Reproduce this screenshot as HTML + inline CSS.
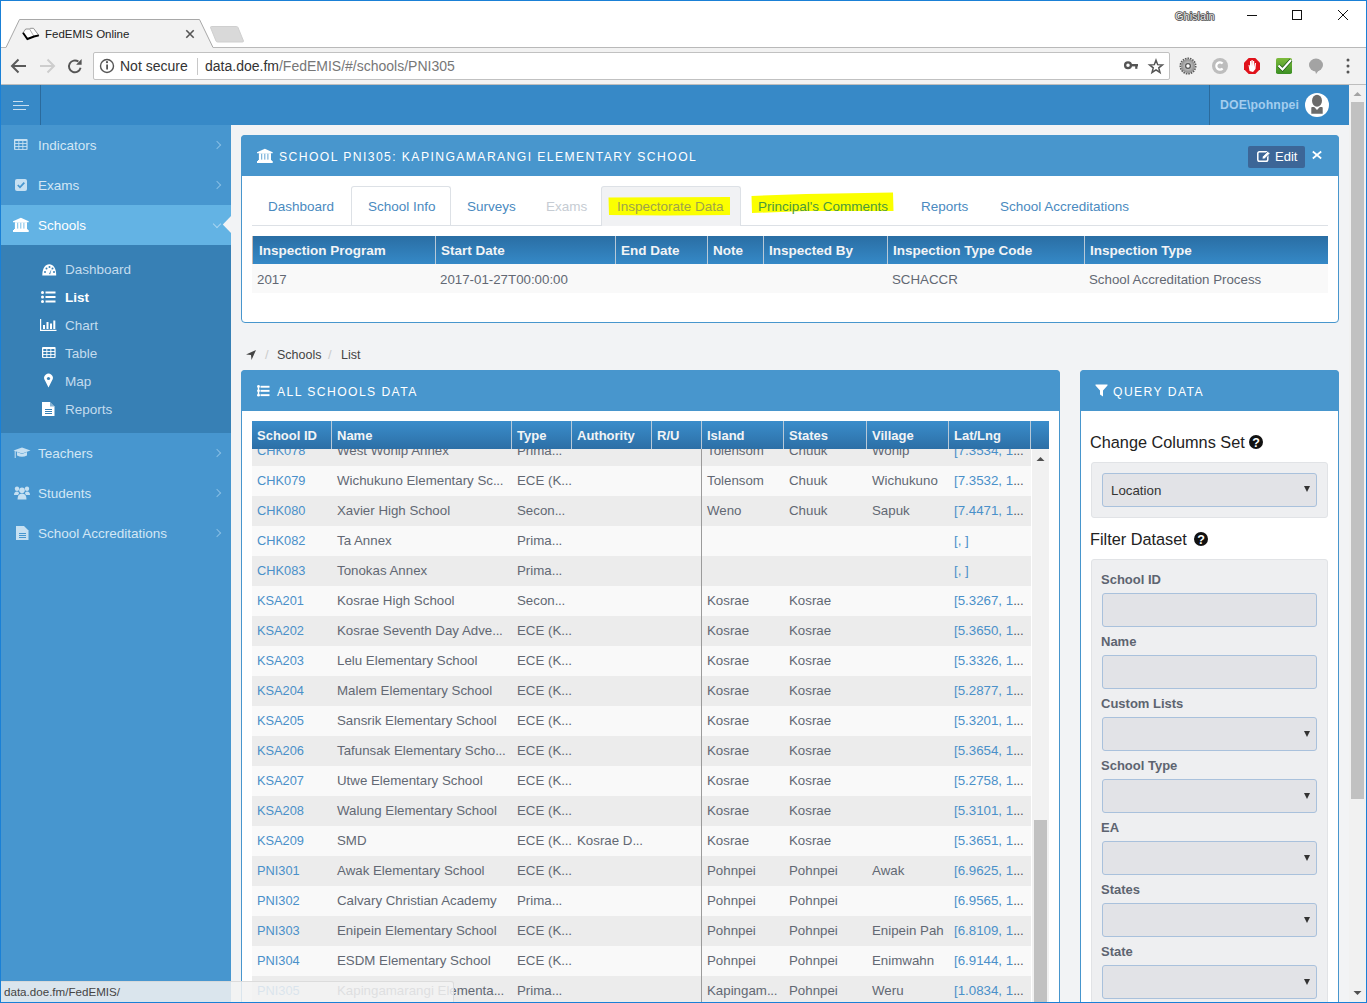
<!DOCTYPE html>
<html><head><meta charset="utf-8">
<style>
*{box-sizing:border-box;margin:0;padding:0}
html,body{width:1367px;height:1003px;overflow:hidden;background:#fff;font-family:"Liberation Sans",sans-serif;}
.a{position:absolute;white-space:nowrap}
#win{position:absolute;left:0;top:0;width:1367px;height:1003px;overflow:hidden;background:#fff}
#bord{position:absolute;left:0;top:0;width:1367px;height:1003px;border:1px solid #1a80d6;pointer-events:none;z-index:50}
/* chrome */
#toolbar{left:1px;top:48px;width:1365px;height:37px;background:#f2f2f2;border-bottom:1px solid #bdbdbd}
#addr{left:92px;top:4px;width:1077px;height:28px;background:#fff;border:1px solid #c1c1c1;border-radius:2px}
/* app */
#hdr{left:1px;top:85px;width:1348px;height:40px;background:#3789c7}
#side{left:1px;top:125px;width:230px;height:878px;background:#4796cf}
#content{left:231px;top:125px;width:1118px;height:878px;background:#f2f3f5}
#vscroll{left:1349px;top:85px;width:17px;height:917px;background:#f1f1f1}
.menu{position:absolute;left:1px;width:230px;height:40px;color:#d3e7f5;font-size:13.5px;line-height:40px}
.menu .lbl{position:absolute;left:37px;top:1px}
.chev{position:absolute;width:6px;height:6px;border-top:1.3px solid #86bde3;border-right:1.3px solid #86bde3;transform:rotate(45deg)}
.sub{position:absolute;left:1px;width:230px;height:28px;line-height:28px;color:#c4dcee;font-size:13.5px}
.sub .lbl{position:absolute;left:64px;top:1px}
svg{overflow:visible}
.panel{position:absolute;background:#fff;border:1px solid #4896cd;border-radius:4px}
.phead{position:absolute;left:-1px;top:-1px;right:-1px;height:41px;background:#4896cd;border-radius:4px 4px 0 0}
.ptitle{position:absolute;color:#fff;font-size:12.2px;letter-spacing:1.4px;line-height:20px}
.tab{position:absolute;top:187px;height:40px;line-height:40px;font-size:13.5px;color:#4a8ac0}
.th{top:421px;height:28px;line-height:28px;background:linear-gradient(#3a8dcb,#2c6fa6);color:#f2f4f6;font-weight:bold;font-size:13px;padding-left:5px;border-left:1px solid #b8c9d8;padding-top:1px}
.th2{top:236px;height:28px;line-height:28px;background:linear-gradient(#2a6ea4,#3589c7);color:#f2f4f6;font-weight:bold;font-size:13.5px;padding-left:5px;border-left:1px solid #b8c9d8;padding-top:1px}
.tt{height:30px;line-height:30px;font-size:13.3px;color:#626873}
.tl{height:30px;line-height:30px;font-size:13.3px;color:#4a90c9}
.id{font-size:12.8px}
.el{letter-spacing:-0.3px}
.tl .el{color:#555a63}
.flbl{font-size:13px;font-weight:bold;color:#5d6470;line-height:18px}
.inp{width:215px;height:34px;background:#e2e3e7;border:1px solid #a9c1dc;border-radius:3px}
.caret{width:0;height:0;border-left:3.5px solid transparent;border-right:3.5px solid transparent;border-top:6px solid #333}
</style></head><body>
<div id="win">
  <!-- title/tab strip -->
  <svg class="a" style="left:0;top:0" width="1367" height="48">
    <line x1="1" y1="47.5" x2="6" y2="47.5" stroke="#b9b9b9" stroke-width="1"/><line x1="213" y1="47.5" x2="1366" y2="47.5" stroke="#b9b9b9" stroke-width="1"/>
    <path d="M5.5 48.5 L19.5 19.5 L199.5 19.5 L213.5 48.5 Z" fill="#f2f2f2" stroke="none"/><path d="M6 47.5 L19.5 19.5 L199.5 19.5 L213 47.5" fill="none" stroke="#a8a8a8" stroke-width="1"/>
    <path d="M211.5 26.5 L236.5 26.5 Q237.5 26.5 238 27.5 L243.5 41 Q243.5 42 242.5 42 L217.5 42 Q216.5 42 216 41 L210.5 27.5 Q210.5 26.5 211.5 26.5 Z" fill="#d9d9d9" stroke="#cfcfcf" stroke-width="1"/>
    <!-- book icon -->
    <g transform="translate(18,22)">
      <path d="M5 10.75 L7.7 7 L11.6 7 L12.3 6.3 L15.5 6.3 L20.8 13.4 L16 14.5 L9.4 17 Z" fill="#fff" stroke="#777" stroke-width="0.8"/>
      <path d="M11.6 7 L16 14.5" stroke="#999" stroke-width="0.8"/>
      <path d="M5 10.75 L9.4 17 L16 14.5 L20.8 13.4" fill="none" stroke="#000" stroke-width="1.9"/>
    </g>
    <!-- tab close -->
    <path d="M186.3 30.3 L193.7 37.7 M193.7 30.3 L186.3 37.7" stroke="#555" stroke-width="1.6"/>
    <!-- window controls -->
    <line x1="1247" y1="15.5" x2="1257" y2="15.5" stroke="#111" stroke-width="1"/>
    <rect x="1292.5" y="10.5" width="9" height="9" fill="none" stroke="#111" stroke-width="1"/>
    <path d="M1338 10 L1348 20 M1348 10 L1338 20" stroke="#111" stroke-width="1"/>
  </svg>
  <div class="a" style="left:45px;top:26px;font-size:11.5px;color:#222;line-height:16px">FedEMIS Online</div>
  <svg class="a" style="left:1174px;top:8px" width="44" height="16"><text x="1" y="11.8" font-family="Liberation Sans" font-size="11" fill="#e8e8e8" stroke="#4a4a4a" stroke-width="1.6" paint-order="stroke" stroke-linejoin="round">Ghislain</text></svg>
  <div class="a" id="toolbar">
    <svg class="a" style="left:0;top:-1px" width="1365" height="38">
      <!-- back -->
      <path d="M11 19 L25 19 M17.5 12.5 L11 19 L17.5 25.5" fill="none" stroke="#5a5a5a" stroke-width="2"/>
      <!-- fwd -->
      <path d="M39 19 L53 19 M46.5 12.5 L53 19 L46.5 25.5" fill="none" stroke="#cdcdcd" stroke-width="2"/>
      <!-- reload -->
      <path d="M77.4 14.6 A5.9 5.9 0 1 0 79.6 20.8" fill="none" stroke="#555" stroke-width="1.9"/>
      <path d="M80.6 12 L80.6 17.8 L75.1 17.8 Z" fill="#555"/>
      <!-- right side icons -->
      <!-- gear -->
      <defs><radialGradient id="gg"><stop offset="0" stop-color="#e0e0e0"/><stop offset="1" stop-color="#8c8c8c"/></radialGradient>
      <linearGradient id="cg" x1="0" y1="0" x2="0" y2="1"><stop offset="0" stop-color="#7dbb3c"/><stop offset="1" stop-color="#3b8f24"/></linearGradient></defs>
      <g transform="translate(1187,19)">
        <circle r="7.6" fill="none" stroke="#5c5c5c" stroke-width="1.8" stroke-dasharray="1.6 0.9"/>
        <circle r="7" fill="url(#gg)"/>
        <circle r="2.4" fill="none" stroke="#555" stroke-width="1.2"/>
        <circle r="1.4" fill="#fff"/>
      </g>
      <g transform="translate(1219,19)">
        <circle r="8" fill="#bdbdbd"/>
        <path d="M2.6 -2.4 A3.6 3.6 0 1 0 2.6 2.4" fill="none" stroke="#fff" stroke-width="2.2"/>
      </g>
      <g transform="translate(1251,19)">
        <path d="M-3.3 -8 L3.3 -8 L8 -3.3 L8 3.3 L3.3 8 L-3.3 8 L-8 3.3 L-8 -3.3 Z" fill="#e0121b"/>
        <path d="M-2.5 5 L-3.5 -1 L-2.5 -1 L-2 1 L-2 -5 L-0.8 -5 L-0.8 0 L-0.5 -6 L0.7 -6 L0.7 0 L1 -5 L2.2 -5 L2.2 1 L3 -3 L4 -3 L3.5 3 L1 6 Z" fill="#fff"/>
      </g>
      <g transform="translate(1283,19)">
        <rect x="-8" y="-8" width="16" height="16" rx="1.8" fill="url(#cg)"/>
        <path d="M-5.5 -0.5 L-1.5 3.5 L7 -6" fill="none" stroke="#1f5a14" stroke-width="3.6"/>
        <path d="M-5.5 -0.5 L-1.5 3.5 L7 -6" fill="none" stroke="#fff" stroke-width="2.2"/>
      </g>
      <g transform="translate(1315,18)">
        <ellipse rx="7" ry="6.5" fill="#a3a3a3"/>
        <path d="M-1 5 L0 9 L3 5 Z" fill="#a3a3a3"/>
      </g>
      <g fill="#555"><circle cx="1347" cy="13" r="1.5"/><circle cx="1347" cy="19" r="1.5"/><circle cx="1347" cy="25" r="1.5"/></g>
    </svg>
    <div class="a" id="addr">
      <svg class="a" style="left:0;top:0" width="30" height="26">
        <circle cx="13" cy="13" r="6.5" fill="none" stroke="#555" stroke-width="1.4"/>
        <rect x="12.2" y="11.5" width="1.8" height="5" fill="#555"/>
        <circle cx="13" cy="9.2" r="1.1" fill="#555"/>
      </svg>
      <div class="a" style="left:26px;top:5px;font-size:14px;color:#333;line-height:16px">Not secure</div>
      <div class="a" style="left:103px;top:5px;width:1px;height:17px;background:#c8c8c8"></div>
      <div class="a" style="left:111px;top:5px;font-size:14px;color:#333;line-height:16px">data.doe.fm<span style="color:#777">/FedEMIS/#/schools/PNI305</span></div>
    </div>
    <svg class="a" style="left:0;top:-1px" width="1365" height="38">
      <circle cx="1127" cy="18.3" r="2.9" fill="none" stroke="#555" stroke-width="2.3"/>
      <rect x="1129.5" y="17" width="7.5" height="2.4" fill="#555"/>
      <rect x="1134.2" y="17" width="2.2" height="4.8" fill="#555"/>
      <path d="M1155.00 13.20 L1156.70 17.65 L1161.47 17.90 L1157.76 20.90 L1159.00 25.50 L1155.00 22.90 L1151.00 25.50 L1152.24 20.90 L1148.53 17.90 L1153.30 17.65 Z" fill="none" stroke="#555" stroke-width="1.5" stroke-linejoin="miter"/>
    </svg>
  </div>

  <!-- APP HEADER -->
  <div class="a" id="hdr">
    <div class="a" style="left:12px;top:16px;width:10px;height:1.2px;background:#c8def0"></div>
    <div class="a" style="left:12px;top:20px;width:16px;height:1.2px;background:#c8def0"></div>
    <div class="a" style="left:12px;top:24px;width:13px;height:1.2px;background:#c8def0"></div>
    <div class="a" style="left:39px;top:0;width:1px;height:40px;background:#2b6a9c"></div>
    <div class="a" style="left:1208px;top:0;width:1px;height:40px;background:#2b6a9c"></div>
    <div class="a" style="left:1219px;top:11px;font-size:12.3px;font-weight:bold;letter-spacing:0.1px;color:#a3cdee;line-height:18px">DOE\pohnpei</div>
    <svg class="a" style="left:1303px;top:8px" width="26" height="26">
      <circle cx="13" cy="12" r="12" fill="#fff"/>
      <ellipse cx="13" cy="7.8" rx="5" ry="6" fill="#6b6b6b"/>
      <path d="M7.3 14.8 Q7.3 14 8.2 14 L10.2 14 L13 17 L15.8 14 L17.8 14 Q18.7 14 18.7 14.8 L18.7 20.8 L7.3 20.8 Z" fill="#6b6b6b"/>
    </svg>
  </div>

  <!-- SIDEBAR -->
  <div class="a" id="side"></div>
  <div class="menu" style="top:125px"><span class="lbl">Indicators</span><span class="chev" style="left:213px;top:17px"></span>
    <svg class="a" style="left:13px;top:14px" width="14" height="11"><rect x="0" y="0" width="13.6" height="11" rx="1" fill="#c6e0f2"/><rect x="1.3" y="2" width="3.1" height="2.1" fill="#4796cf"/><rect x="5.3" y="2" width="3.1" height="2.1" fill="#4796cf"/><rect x="9.3" y="2" width="3.1" height="2.1" fill="#4796cf"/><rect x="1.3" y="5" width="3.1" height="2.1" fill="#4796cf"/><rect x="5.3" y="5" width="3.1" height="2.1" fill="#4796cf"/><rect x="9.3" y="5" width="3.1" height="2.1" fill="#4796cf"/><rect x="1.3" y="8" width="3.1" height="2.1" fill="#4796cf"/><rect x="5.3" y="8" width="3.1" height="2.1" fill="#4796cf"/><rect x="9.3" y="8" width="3.1" height="2.1" fill="#4796cf"/></svg>
  </div>
  <div class="menu" style="top:165px"><span class="lbl">Exams</span><span class="chev" style="left:213px;top:17px"></span>
    <svg class="a" style="left:14px;top:14px" width="12" height="12"><rect x="0" y="0" width="12" height="12" rx="2" fill="#c6e0f2"/><path d="M2.8 6 L5 8.3 L9.3 3.7" fill="none" stroke="#4796cf" stroke-width="1.8"/></svg>
  </div>
  <div class="menu" style="top:205px;background:#63b3e4;color:#fff"><span class="lbl">Schools</span><span class="chev" style="left:213px;top:16px;transform:rotate(135deg);border-color:#a9d4f0"></span>
    <svg class="a" style="left:12px;top:12px" width="16" height="15"><path d="M7.85 0.8 L15.7 4.2 L15.7 5.3 L0 5.3 L0 4.2 Z" fill="#fff"/><rect x="1.9" y="5.2" width="12.1" height="7" fill="#fff"/><g fill="#63b3e4" opacity="0.85"><rect x="4.2" y="5.8" width="1" height="5.8"/><rect x="7.3" y="5.8" width="1" height="5.8"/><rect x="10.4" y="5.8" width="1" height="5.8"/></g><rect x="1" y="12" width="13.7" height="1.2" fill="#fff"/><rect x="0" y="13" width="15.7" height="2" fill="#fff"/></svg>
    <svg class="a" style="left:221px;top:10px" width="10" height="19"><path d="M10 0 L0.8 9.5 L10 19 Z" fill="#f2f3f5"/></svg>
  </div>
  <div class="a" style="left:1px;top:245px;width:230px;height:188px;background:#3780b5"></div>
  <div class="sub" style="top:255px;color:#c4dcee"><span class="lbl">Dashboard</span>
    <svg class="a" style="left:40.5px;top:8.5px" width="15" height="12"><path d="M0.3 11.5 C0.3 4 3.5 0.3 7.25 0.3 C11 0.3 14.2 4 14.2 11.5 Z" fill="#fff"/><g fill="#3780b5"><circle cx="3" cy="8" r="1"/><circle cx="4.5" cy="4.5" r="1"/><circle cx="7.5" cy="3" r="1"/><circle cx="10.5" cy="4.5" r="1"/><circle cx="12" cy="8" r="1"/><path d="M7 10 L9.5 5 L8.2 10.2 Z"/></g></svg>
  </div>
  <div class="sub" style="top:283px;color:#fff;font-weight:bold"><span class="lbl">List</span>
    <svg class="a" style="left:40px;top:8px" width="15" height="12"><g fill="#fff"><circle cx="1.5" cy="1.5" r="1.5"/><circle cx="1.5" cy="6" r="1.5"/><circle cx="1.5" cy="10.5" r="1.5"/><rect x="4.5" y="0.5" width="10" height="2"/><rect x="4.5" y="5" width="10" height="2"/><rect x="4.5" y="9.5" width="10" height="2"/></g></svg>
  </div>
  <div class="sub" style="top:311px"><span class="lbl">Chart</span>
    <svg class="a" style="left:39px;top:8px" width="17" height="12"><g fill="#fff"><rect x="0" y="0" width="1.2" height="12"/><rect x="0" y="10.8" width="16.5" height="1.2"/><rect x="3" y="6" width="2" height="4"/><rect x="6.5" y="3" width="2" height="7"/><rect x="10" y="4.5" width="2" height="5.5"/><rect x="13.3" y="1.5" width="2" height="8.5"/></g></svg>
  </div>
  <div class="sub" style="top:339px"><span class="lbl">Table</span>
    <svg class="a" style="left:40.5px;top:8px" width="14" height="11"><rect x="0" y="0" width="13.6" height="11" rx="1" fill="#fff"/><rect x="1.3" y="2" width="3.1" height="2.1" fill="#3780b5"/><rect x="5.3" y="2" width="3.1" height="2.1" fill="#3780b5"/><rect x="9.3" y="2" width="3.1" height="2.1" fill="#3780b5"/><rect x="1.3" y="5" width="3.1" height="2.1" fill="#3780b5"/><rect x="5.3" y="5" width="3.1" height="2.1" fill="#3780b5"/><rect x="9.3" y="5" width="3.1" height="2.1" fill="#3780b5"/><rect x="1.3" y="8" width="3.1" height="2.1" fill="#3780b5"/><rect x="5.3" y="8" width="3.1" height="2.1" fill="#3780b5"/><rect x="9.3" y="8" width="3.1" height="2.1" fill="#3780b5"/></svg>
  </div>
  <div class="sub" style="top:367px"><span class="lbl">Map</span>
    <svg class="a" style="left:43px;top:7px" width="10" height="14"><path d="M4.5 13.5 L1 6.5 A4.3 4.3 0 1 1 8 6.5 Z" fill="#fff"/><circle cx="4.5" cy="4.5" r="1.6" fill="#3780b5"/></svg>
  </div>
  <div class="sub" style="top:395px"><span class="lbl">Reports</span>
    <svg class="a" style="left:41px;top:7px" width="13" height="14"><path d="M0 0 L8 0 L12.5 4.5 L12.5 14 L0 14 Z" fill="#fff"/><path d="M8 0 L8 4.5 L12.5 4.5" fill="#3780b5" opacity="0.6"/><g fill="#3780b5"><rect x="3" y="7" width="7" height="1"/><rect x="3" y="9" width="7" height="1"/><rect x="3" y="11" width="7" height="1"/></g></svg>
  </div>
  <div class="menu" style="top:433px"><span class="lbl">Teachers</span><span class="chev" style="left:213px;top:17px"></span>
    <svg class="a" style="left:12px;top:14px" width="18" height="13"><path d="M9 0.5 L17.5 3.5 L9 6.5 L0.5 3.5 Z" fill="#c6e0f2"/><path d="M4 5 L4 8.5 Q9 11 14 8.5 L14 5 L9 7 Z" fill="#c6e0f2"/><rect x="1.7" y="4" width="1" height="7" fill="#c6e0f2"/></svg>
  </div>
  <div class="menu" style="top:473px"><span class="lbl">Students</span><span class="chev" style="left:213px;top:17px"></span>
    <svg class="a" style="left:13px;top:13px" width="16" height="14"><g fill="#c6e0f2"><circle cx="3" cy="2.8" r="2.2"/><circle cx="13" cy="2.8" r="2.2"/><circle cx="8" cy="4.3" r="2.8"/><path d="M0 9 Q0 5.5 3 5.5 Q5 5.5 5 7.5 L4 9 Z"/><path d="M16 9 Q16 5.5 13 5.5 Q11 5.5 11 7.5 L12 9 Z"/><path d="M3.5 13.5 Q3.5 7.5 8 7.5 Q12.5 7.5 12.5 13.5 Z"/></g></svg>
  </div>
  <div class="menu" style="top:513px"><span class="lbl">School Accreditations</span><span class="chev" style="left:213px;top:17px"></span>
    <svg class="a" style="left:15px;top:13px" width="13" height="14"><path d="M0 0 L8 0 L12.5 4.5 L12.5 14 L0 14 Z" fill="#c6e0f2"/><g fill="#4796cf"><rect x="3" y="7" width="7" height="1"/><rect x="3" y="9" width="7" height="1"/><rect x="3" y="11" width="7" height="1"/></g></svg>
  </div>

  <!-- CONTENT -->
  <div class="a" id="content"></div>

  <!-- school panel -->
  <div class="panel" style="left:241px;top:135px;width:1098px;height:188px">
    <div class="phead"></div>
  </div>
  <svg class="a" style="left:257px;top:148px" width="16" height="15"><path d="M7.85 0.8 L15.7 4.2 L15.7 5.3 L0 5.3 L0 4.2 Z" fill="#fff"/><rect x="1.9" y="5.2" width="12.1" height="7" fill="#fff"/><g fill="#4896cd" opacity="0.85"><rect x="4.2" y="5.8" width="1" height="5.8"/><rect x="7.3" y="5.8" width="1" height="5.8"/><rect x="10.4" y="5.8" width="1" height="5.8"/></g><rect x="1" y="12" width="13.7" height="1.2" fill="#fff"/><rect x="0" y="13" width="15.7" height="2" fill="#fff"/></svg>
  <div class="a ptitle" style="left:279px;top:147px">SCHOOL PNI305: KAPINGAMARANGI ELEMENTARY SCHOOL</div>
  <div class="a" style="left:1248px;top:146px;width:57px;height:22px;background:#3c6697;border-radius:2px;color:#fff;font-size:13px;line-height:21px;padding-left:27px">Edit</div>
  <svg class="a" style="left:1257px;top:150px" width="16" height="13"><rect x="0.8" y="1.8" width="10" height="9.5" rx="1.8" fill="none" stroke="#fff" stroke-width="1.5"/><path d="M5 9 L5.3 6.8 L10.8 1.3 L13 3.5 L7.5 9 Z" fill="#fff" stroke="#3c6697" stroke-width="0.9"/></svg>
  <svg class="a" style="left:1312px;top:151px" width="10" height="8"><path d="M0.8 0.5 L9.2 7.5 M9.2 0.5 L0.8 7.5" stroke="#fff" stroke-width="1.7"/></svg>

  <!-- tabs -->
  <div class="a" style="left:252px;top:225px;width:1076px;height:1px;background:#dde1e6"></div>
  <div class="tab" style="left:268px">Dashboard</div>
  <div class="tab" style="left:351px;width:100px;border:1px solid #dde1e6;border-bottom:none;border-radius:3px 3px 0 0;background:#fff;padding-left:16px;line-height:40px;top:186px;height:39px">School Info</div>
  <div class="tab" style="left:467px">Surveys</div>
  <div class="tab" style="left:546px;color:#c6ccd3">Exams</div>
  <div class="tab" style="left:601px;width:140px;border:1px solid #dde1e6;border-bottom:none;border-radius:3px 3px 0 0;background:#f1f2f4;top:186px;height:40px"></div>
  <svg class="a" style="left:606px;top:190px" width="300" height="30">
    <path d="M2.5 7.5 L124 7 L124 25 L60 25.5 L3 25 Z" fill="#fbff00"/>
    <path d="M145.5 6 L200 4 L287 2.5 L287.5 21 L200 21 L146 23 Z" fill="#fbff00"/>
  </svg>
  <div class="tab" style="left:617px;color:#9ea34a">Inspectorate Data</div>
  <div class="tab" style="left:758px;color:#4b9a3c">Principal's Comments</div>
  <div class="tab" style="left:921px">Reports</div>
  <div class="tab" style="left:1000px">School Accreditations</div>

  <!-- inspection table -->
  <div class="a th2" style="left:252px;width:183px;padding-left:6px;border-left-color:#c9b8b0;">Inspection Program</div>
<div class="a th2" style="left:435px;width:180px;">Start Date</div>
<div class="a th2" style="left:615px;width:92px;">End Date</div>
<div class="a th2" style="left:707px;width:56px;">Note</div>
<div class="a th2" style="left:763px;width:124px;">Inspected By</div>
<div class="a th2" style="left:887px;width:197px;">Inspection Type Code</div>
<div class="a th2" style="left:1084px;width:244px;">Inspection Type</div>
  <div class="a" style="left:252px;top:264px;width:1076px;height:29px;background:#f9f9f9"></div>
  <div class="a tt" style="left:257px;top:265px">2017</div>
<div class="a tt" style="left:440px;top:265px">2017-01-27T00:00:00</div>
<div class="a tt" style="left:892px;top:265px">SCHACCR</div>
<div class="a tt" style="left:1089px;top:265px">School Accreditation Process</div>

  <!-- breadcrumb -->
  <svg class="a" style="left:245px;top:349px" width="12" height="12"><path d="M11 1 L1 5.5 L6 6 L6.5 11 Z" fill="#444"/></svg>
  <div class="a" style="left:265px;top:347px;font-size:13px;color:#ccc;line-height:16px">/</div>
  <div class="a" style="left:277px;top:347px;font-size:12.5px;color:#444;line-height:16px">Schools</div>
  <div class="a" style="left:328px;top:347px;font-size:13px;color:#ccc;line-height:16px">/</div>
  <div class="a" style="left:341px;top:347px;font-size:12.5px;color:#444;line-height:16px">List</div>

  <!-- all schools panel -->
  <div class="panel" style="left:241px;top:370px;width:819px;height:700px">
    <div class="phead"></div>
  </div>
  <svg class="a" style="left:257px;top:385px" width="14" height="13"><g fill="#fff"><rect x="0.8" y="1" width="1.4" height="10"/><circle cx="1.5" cy="1.5" r="1.4"/><circle cx="1.5" cy="5.8" r="1.4"/><circle cx="1.5" cy="10.2" r="1.4"/><rect x="3.5" y="0.8" width="9" height="1.9"/><rect x="3.5" y="4.9" width="9" height="1.9"/><rect x="3.5" y="9.2" width="9" height="1.9"/></g></svg>
  <div class="a ptitle" style="left:277px;top:382px">ALL SCHOOLS DATA</div>

  <!-- table body -->
  <div class="a" style="left:252px;top:436px;width:779px;height:30px;background:#ececec"></div>
<div class="a tl id" style="left:257px;top:436px">CHK078</div>
<div class="a tt" style="left:337px;top:436px">West Wonip Annex</div>
<div class="a tt" style="left:517px;top:436px">Prima<span class="el">...</span></div>
<div class="a tt" style="left:707px;top:436px">Tolensom</div>
<div class="a tt" style="left:789px;top:436px">Chuuk</div>
<div class="a tt" style="left:872px;top:436px">Wonip</div>
<div class="a tl" style="left:954px;top:436px">[7.3534, 1<span class="el">...</span></div>
<div class="a" style="left:252px;top:466px;width:779px;height:30px;background:#f9f9f9"></div>
<div class="a tl id" style="left:257px;top:466px">CHK079</div>
<div class="a tt" style="left:337px;top:466px">Wichukuno Elementary Sc<span class="el">...</span></div>
<div class="a tt" style="left:517px;top:466px">ECE (K<span class="el">...</span></div>
<div class="a tt" style="left:707px;top:466px">Tolensom</div>
<div class="a tt" style="left:789px;top:466px">Chuuk</div>
<div class="a tt" style="left:872px;top:466px">Wichukuno</div>
<div class="a tl" style="left:954px;top:466px">[7.3532, 1<span class="el">...</span></div>
<div class="a" style="left:252px;top:496px;width:779px;height:30px;background:#ececec"></div>
<div class="a tl id" style="left:257px;top:496px">CHK080</div>
<div class="a tt" style="left:337px;top:496px">Xavier High School</div>
<div class="a tt" style="left:517px;top:496px">Secon<span class="el">...</span></div>
<div class="a tt" style="left:707px;top:496px">Weno</div>
<div class="a tt" style="left:789px;top:496px">Chuuk</div>
<div class="a tt" style="left:872px;top:496px">Sapuk</div>
<div class="a tl" style="left:954px;top:496px">[7.4471, 1<span class="el">...</span></div>
<div class="a" style="left:252px;top:526px;width:779px;height:30px;background:#f9f9f9"></div>
<div class="a tl id" style="left:257px;top:526px">CHK082</div>
<div class="a tt" style="left:337px;top:526px">Ta Annex</div>
<div class="a tt" style="left:517px;top:526px">Prima<span class="el">...</span></div>
<div class="a tl" style="left:954px;top:526px">[, ]</div>
<div class="a" style="left:252px;top:556px;width:779px;height:30px;background:#ececec"></div>
<div class="a tl id" style="left:257px;top:556px">CHK083</div>
<div class="a tt" style="left:337px;top:556px">Tonokas Annex</div>
<div class="a tt" style="left:517px;top:556px">Prima<span class="el">...</span></div>
<div class="a tl" style="left:954px;top:556px">[, ]</div>
<div class="a" style="left:252px;top:586px;width:779px;height:30px;background:#f9f9f9"></div>
<div class="a tl id" style="left:257px;top:586px">KSA201</div>
<div class="a tt" style="left:337px;top:586px">Kosrae High School</div>
<div class="a tt" style="left:517px;top:586px">Secon<span class="el">...</span></div>
<div class="a tt" style="left:707px;top:586px">Kosrae</div>
<div class="a tt" style="left:789px;top:586px">Kosrae</div>
<div class="a tl" style="left:954px;top:586px">[5.3267, 1<span class="el">...</span></div>
<div class="a" style="left:252px;top:616px;width:779px;height:30px;background:#ececec"></div>
<div class="a tl id" style="left:257px;top:616px">KSA202</div>
<div class="a tt" style="left:337px;top:616px">Kosrae Seventh Day Adve<span class="el">...</span></div>
<div class="a tt" style="left:517px;top:616px">ECE (K<span class="el">...</span></div>
<div class="a tt" style="left:707px;top:616px">Kosrae</div>
<div class="a tt" style="left:789px;top:616px">Kosrae</div>
<div class="a tl" style="left:954px;top:616px">[5.3650, 1<span class="el">...</span></div>
<div class="a" style="left:252px;top:646px;width:779px;height:30px;background:#f9f9f9"></div>
<div class="a tl id" style="left:257px;top:646px">KSA203</div>
<div class="a tt" style="left:337px;top:646px">Lelu Elementary School</div>
<div class="a tt" style="left:517px;top:646px">ECE (K<span class="el">...</span></div>
<div class="a tt" style="left:707px;top:646px">Kosrae</div>
<div class="a tt" style="left:789px;top:646px">Kosrae</div>
<div class="a tl" style="left:954px;top:646px">[5.3326, 1<span class="el">...</span></div>
<div class="a" style="left:252px;top:676px;width:779px;height:30px;background:#ececec"></div>
<div class="a tl id" style="left:257px;top:676px">KSA204</div>
<div class="a tt" style="left:337px;top:676px">Malem Elementary School</div>
<div class="a tt" style="left:517px;top:676px">ECE (K<span class="el">...</span></div>
<div class="a tt" style="left:707px;top:676px">Kosrae</div>
<div class="a tt" style="left:789px;top:676px">Kosrae</div>
<div class="a tl" style="left:954px;top:676px">[5.2877, 1<span class="el">...</span></div>
<div class="a" style="left:252px;top:706px;width:779px;height:30px;background:#f9f9f9"></div>
<div class="a tl id" style="left:257px;top:706px">KSA205</div>
<div class="a tt" style="left:337px;top:706px">Sansrik Elementary School</div>
<div class="a tt" style="left:517px;top:706px">ECE (K<span class="el">...</span></div>
<div class="a tt" style="left:707px;top:706px">Kosrae</div>
<div class="a tt" style="left:789px;top:706px">Kosrae</div>
<div class="a tl" style="left:954px;top:706px">[5.3201, 1<span class="el">...</span></div>
<div class="a" style="left:252px;top:736px;width:779px;height:30px;background:#ececec"></div>
<div class="a tl id" style="left:257px;top:736px">KSA206</div>
<div class="a tt" style="left:337px;top:736px">Tafunsak Elementary Scho<span class="el">...</span></div>
<div class="a tt" style="left:517px;top:736px">ECE (K<span class="el">...</span></div>
<div class="a tt" style="left:707px;top:736px">Kosrae</div>
<div class="a tt" style="left:789px;top:736px">Kosrae</div>
<div class="a tl" style="left:954px;top:736px">[5.3654, 1<span class="el">...</span></div>
<div class="a" style="left:252px;top:766px;width:779px;height:30px;background:#f9f9f9"></div>
<div class="a tl id" style="left:257px;top:766px">KSA207</div>
<div class="a tt" style="left:337px;top:766px">Utwe Elementary School</div>
<div class="a tt" style="left:517px;top:766px">ECE (K<span class="el">...</span></div>
<div class="a tt" style="left:707px;top:766px">Kosrae</div>
<div class="a tt" style="left:789px;top:766px">Kosrae</div>
<div class="a tl" style="left:954px;top:766px">[5.2758, 1<span class="el">...</span></div>
<div class="a" style="left:252px;top:796px;width:779px;height:30px;background:#ececec"></div>
<div class="a tl id" style="left:257px;top:796px">KSA208</div>
<div class="a tt" style="left:337px;top:796px">Walung Elementary School</div>
<div class="a tt" style="left:517px;top:796px">ECE (K<span class="el">...</span></div>
<div class="a tt" style="left:707px;top:796px">Kosrae</div>
<div class="a tt" style="left:789px;top:796px">Kosrae</div>
<div class="a tl" style="left:954px;top:796px">[5.3101, 1<span class="el">...</span></div>
<div class="a" style="left:252px;top:826px;width:779px;height:30px;background:#f9f9f9"></div>
<div class="a tl id" style="left:257px;top:826px">KSA209</div>
<div class="a tt" style="left:337px;top:826px">SMD</div>
<div class="a tt" style="left:517px;top:826px">ECE (K<span class="el">...</span></div>
<div class="a tt" style="left:577px;top:826px">Kosrae D<span class="el">...</span></div>
<div class="a tt" style="left:707px;top:826px">Kosrae</div>
<div class="a tt" style="left:789px;top:826px">Kosrae</div>
<div class="a tl" style="left:954px;top:826px">[5.3651, 1<span class="el">...</span></div>
<div class="a" style="left:252px;top:856px;width:779px;height:30px;background:#ececec"></div>
<div class="a tl id" style="left:257px;top:856px">PNI301</div>
<div class="a tt" style="left:337px;top:856px">Awak Elementary School</div>
<div class="a tt" style="left:517px;top:856px">ECE (K<span class="el">...</span></div>
<div class="a tt" style="left:707px;top:856px">Pohnpei</div>
<div class="a tt" style="left:789px;top:856px">Pohnpei</div>
<div class="a tt" style="left:872px;top:856px">Awak</div>
<div class="a tl" style="left:954px;top:856px">[6.9625, 1<span class="el">...</span></div>
<div class="a" style="left:252px;top:886px;width:779px;height:30px;background:#f9f9f9"></div>
<div class="a tl id" style="left:257px;top:886px">PNI302</div>
<div class="a tt" style="left:337px;top:886px">Calvary Christian Academy</div>
<div class="a tt" style="left:517px;top:886px">Prima<span class="el">...</span></div>
<div class="a tt" style="left:707px;top:886px">Pohnpei</div>
<div class="a tt" style="left:789px;top:886px">Pohnpei</div>
<div class="a tl" style="left:954px;top:886px">[6.9565, 1<span class="el">...</span></div>
<div class="a" style="left:252px;top:916px;width:779px;height:30px;background:#ececec"></div>
<div class="a tl id" style="left:257px;top:916px">PNI303</div>
<div class="a tt" style="left:337px;top:916px">Enipein Elementary School</div>
<div class="a tt" style="left:517px;top:916px">ECE (K<span class="el">...</span></div>
<div class="a tt" style="left:707px;top:916px">Pohnpei</div>
<div class="a tt" style="left:789px;top:916px">Pohnpei</div>
<div class="a tt" style="left:872px;top:916px">Enipein Pah</div>
<div class="a tl" style="left:954px;top:916px">[6.8109, 1<span class="el">...</span></div>
<div class="a" style="left:252px;top:946px;width:779px;height:30px;background:#f9f9f9"></div>
<div class="a tl id" style="left:257px;top:946px">PNI304</div>
<div class="a tt" style="left:337px;top:946px">ESDM Elementary School</div>
<div class="a tt" style="left:517px;top:946px">ECE (K<span class="el">...</span></div>
<div class="a tt" style="left:707px;top:946px">Pohnpei</div>
<div class="a tt" style="left:789px;top:946px">Pohnpei</div>
<div class="a tt" style="left:872px;top:946px">Enimwahn</div>
<div class="a tl" style="left:954px;top:946px">[6.9144, 1<span class="el">...</span></div>
<div class="a" style="left:252px;top:976px;width:779px;height:30px;background:#ececec"></div>
<div class="a tl id" style="left:257px;top:976px">PNI305</div>
<div class="a tt" style="left:337px;top:976px">Kapingamarangi Elementa<span class="el">...</span></div>
<div class="a tt" style="left:517px;top:976px">Prima<span class="el">...</span></div>
<div class="a tt" style="left:707px;top:976px">Kapingam<span class="el">...</span></div>
<div class="a tt" style="left:789px;top:976px">Pohnpei</div>
<div class="a tt" style="left:872px;top:976px">Weru</div>
<div class="a tl" style="left:954px;top:976px">[1.0834, 1<span class="el">...</span></div>
  <div class="a" style="left:701px;top:449px;width:1px;height:560px;background:#9b9b9b"></div>
  <div class="a th" style="left:252px;width:79px;border-left:none;">School ID</div>
<div class="a th" style="left:331px;width:180px;">Name</div>
<div class="a th" style="left:511px;width:60px;">Type</div>
<div class="a th" style="left:571px;width:80px;">Authority</div>
<div class="a th" style="left:651px;width:50px;">R/U</div>
<div class="a th" style="left:701px;width:82px;">Island</div>
<div class="a th" style="left:783px;width:83px;">States</div>
<div class="a th" style="left:866px;width:82px;">Village</div>
<div class="a th" style="left:948px;width:82px;">Lat/Lng</div>
<div class="a th" style="left:1030px;width:19px;"></div>
  <div class="a" style="left:1031px;top:449px;width:1px;height:560px;background:#fff"></div><div class="a" style="left:1032px;top:449px;width:17px;height:560px;background:#f1f1f1"></div>
  <div class="a" style="left:1034px;top:820px;width:13px;height:190px;background:#c1c1c1"></div>
  <svg class="a" style="left:1036px;top:456px" width="9" height="6"><path d="M0.5 5 L4.5 1 L8.5 5 Z" fill="#505050"/></svg>

  <!-- query panel -->
  <div class="panel" style="left:1080px;top:370px;width:259px;height:700px">
    <div class="phead"></div>
  </div>
  <svg class="a" style="left:1095px;top:384px" width="13" height="13"><path d="M0.5 0.5 L12.5 0.5 L12.5 1.5 L8 6.5 L8 12.5 L5 10.5 L5 6.5 L0.5 1.5 Z" fill="#fff"/></svg>
  <div class="a ptitle" style="left:1113px;top:382px">QUERY DATA</div>
  <div class="a" style="left:1090px;top:432px;font-size:16.3px;color:#222;line-height:20px">Change Columns Set</div>
  <svg class="a" style="left:1249px;top:435px" width="14" height="14"><circle cx="7" cy="7" r="7" fill="#111"/><text x="7" y="11.5" font-size="12.5" font-weight="bold" text-anchor="middle" fill="#fff" font-family="Liberation Sans">?</text></svg>
  <div class="a" style="left:1091px;top:462px;width:237px;height:56px;background:#eeeff1;border:1px solid #e1e3e6;border-radius:3px"></div>
  <div class="a inp" style="left:1102px;top:473px;height:34px"></div>
  <div class="a" style="left:1111px;top:482px;font-size:13.3px;color:#333;line-height:18px">Location</div>
  <div class="a caret" style="left:1304px;top:486px"></div>
  <div class="a" style="left:1090px;top:529px;font-size:16.3px;color:#222;line-height:20px">Filter Dataset</div>
  <svg class="a" style="left:1194px;top:532px" width="14" height="14"><circle cx="7" cy="7" r="7" fill="#111"/><text x="7" y="11.5" font-size="12.5" font-weight="bold" text-anchor="middle" fill="#fff" font-family="Liberation Sans">?</text></svg>
  <div class="a" style="left:1091px;top:559px;width:237px;height:450px;background:#eeeff1;border:1px solid #e1e3e6;border-radius:3px"></div>
  <div class="a flbl" style="left:1101px;top:571px">School ID</div>
<div class="a inp" style="left:1102px;top:593px"></div>
<div class="a flbl" style="left:1101px;top:633px">Name</div>
<div class="a inp" style="left:1102px;top:655px"></div>
<div class="a flbl" style="left:1101px;top:695px">Custom Lists</div>
<div class="a inp" style="left:1102px;top:717px"></div>
<div class="a caret" style="left:1304px;top:731px"></div>
<div class="a flbl" style="left:1101px;top:757px">School Type</div>
<div class="a inp" style="left:1102px;top:779px"></div>
<div class="a caret" style="left:1304px;top:793px"></div>
<div class="a flbl" style="left:1101px;top:819px">EA</div>
<div class="a inp" style="left:1102px;top:841px"></div>
<div class="a caret" style="left:1304px;top:855px"></div>
<div class="a flbl" style="left:1101px;top:881px">States</div>
<div class="a inp" style="left:1102px;top:903px"></div>
<div class="a caret" style="left:1304px;top:917px"></div>
<div class="a flbl" style="left:1101px;top:943px">State</div>
<div class="a inp" style="left:1102px;top:965px"></div>
<div class="a caret" style="left:1304px;top:979px"></div>

  <!-- page scrollbar -->
  <div class="a" id="vscroll"></div>
  <div class="a" style="left:1351px;top:102px;width:13px;height:697px;background:#c1c1c1"></div>
  <svg class="a" style="left:1353px;top:91px" width="9" height="6"><path d="M0.5 5 L4.5 1 L8.5 5 Z" fill="#a3a3a3"/></svg>
  <svg class="a" style="left:1353px;top:990px" width="9" height="6"><path d="M0.5 1 L4.5 5 L8.5 1 Z" fill="#505050"/></svg>

  <!-- status bar -->
  <div class="a" style="left:1px;top:981px;width:453px;height:21px;background:rgba(242,242,242,0.86);border:1px solid rgba(214,214,214,0.8);border-left:none;border-bottom:none;border-radius:0 3px 0 0"></div>
  <div class="a" style="left:4px;top:984px;font-size:11.6px;color:#444;line-height:16px">data.doe.fm/FedEMIS/</div>
</div>
<div id="bord"></div>
</body></html>
